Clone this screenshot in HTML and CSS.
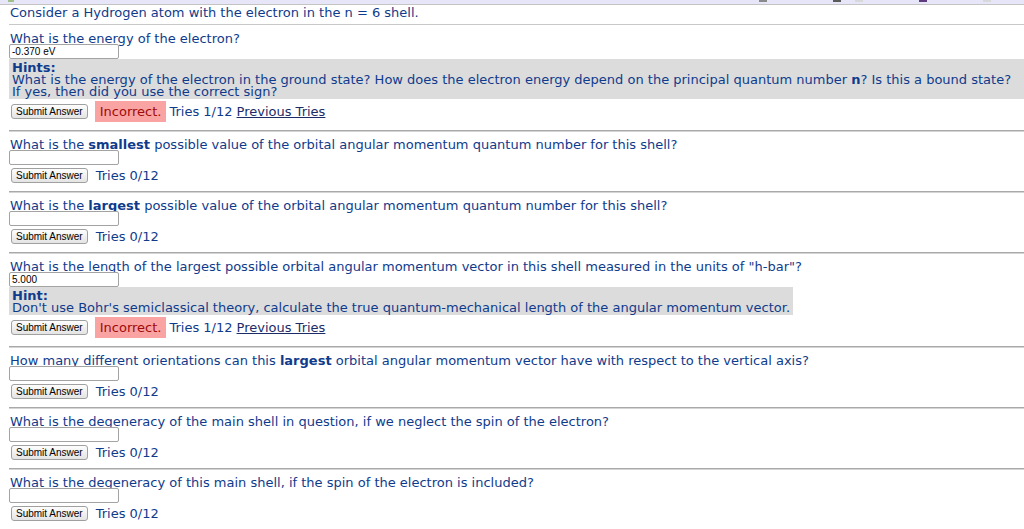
FILE: index.html
```html
<!DOCTYPE html>
<html>
<head>
<meta charset="utf-8">
<link rel="stylesheet" href="styles.css">
</head>
<body>
<div class="topbar">
  <span class="mark mark-green"></span>
  <span class="mark mark-gray" style="margin-left:745px"></span>
  <span class="mark mark-dark" style="margin-left:66px"></span>
  <span class="mark mark-light" style="margin-left:14px"></span>
  <span class="mark mark-purple" style="margin-left:56px"></span>
  <span class="mark mark-light" style="margin-left:56px"></span>
</div>
<div class="page">
  <div class="intro">Consider a Hydrogen atom with the electron in the n = 6 shell.</div>
  <div class="rule-light"></div>

  <div class="question">
    <div class="qtext">What is the energy of the electron?</div>
    <input class="answer" type="text" value="-0.370 eV">
    <div class="hint"><b>Hints:</b><br>What is the energy of the electron in the ground state? How does the electron energy depend on the principal quantum number <b>n</b>? Is this a bound state? If yes, then did you use the correct sign?</div>
    <div class="row">
      <button class="submit">Submit Answer</button>
      <span class="status">Incorrect.</span>
      <span class="tries">Tries 1/12</span>
      <a class="prev" href="#">Previous Tries</a>
    </div>
  </div>
  <div class="rule"></div>

  <div class="question">
    <div class="qtext">What is the <b>smallest</b> possible value of the orbital angular momentum quantum number for this shell?</div>
    <input class="answer" type="text" value="">
    <div class="row">
      <button class="submit">Submit Answer</button>
      <span class="tries">Tries 0/12</span>
    </div>
  </div>
  <div class="rule"></div>

  <div class="question">
    <div class="qtext">What is the <b>largest</b> possible value of the orbital angular momentum quantum number for this shell?</div>
    <input class="answer" type="text" value="">
    <div class="row">
      <button class="submit">Submit Answer</button>
      <span class="tries">Tries 0/12</span>
    </div>
  </div>
  <div class="rule"></div>

  <div class="question">
    <div class="qtext">What is the length of the largest possible orbital angular momentum vector in this shell measured in the units of "h-bar"?</div>
    <input class="answer" type="text" value="5.000">
    <div class="hint"><b>Hint:</b><br>Don't use Bohr's semiclassical theory, calculate the true quantum-mechanical length of the angular momentum vector.</div>
    <div class="row">
      <button class="submit">Submit Answer</button>
      <span class="status">Incorrect.</span>
      <span class="tries">Tries 1/12</span>
      <a class="prev" href="#">Previous Tries</a>
    </div>
  </div>
  <div class="rule"></div>

  <div class="question">
    <div class="qtext">How many different orientations can this <b>largest</b> orbital angular momentum vector have with respect to the vertical axis?</div>
    <input class="answer" type="text" value="">
    <div class="row">
      <button class="submit">Submit Answer</button>
      <span class="tries">Tries 0/12</span>
    </div>
  </div>
  <div class="rule"></div>

  <div class="question">
    <div class="qtext">What is the degeneracy of the main shell in question, if we neglect the spin of the electron?</div>
    <input class="answer" type="text" value="">
    <div class="row">
      <button class="submit">Submit Answer</button>
      <span class="tries">Tries 0/12</span>
    </div>
  </div>
  <div class="rule"></div>

  <div class="question">
    <div class="qtext">What is the degeneracy of this main shell, if the spin of the electron is included?</div>
    <input class="answer" type="text" value="">
    <div class="row">
      <button class="submit">Submit Answer</button>
      <span class="tries">Tries 0/12</span>
    </div>
  </div>
</div>
</body>
</html>
```
FILE: styles.css
```css
html, body {
  margin: 0;
  padding: 0;
  background: #ffffff;
}
body {
  font-family: "DejaVu Sans", Verdana, sans-serif;
  font-size: 13px;
  color: #0f3b8c;
  overflow: hidden;
}
.topbar {
  height: 4px;
  background: #e6e6f8;
  border-bottom: 1px solid #c4c4c4;
  display: flex;
  align-items: flex-start;
  overflow: hidden;
}
.mark {
  display: block;
  height: 2px;
  width: 8px;
  flex: none;
}
.mark-green { background: #9fbf8a; margin-left: 8px; width: 6px; }
.mark-gray { background: #8a8a8a; }
.mark-dark { background: #5a5a5a; }
.mark-light { background: #d8d8d8; }
.mark-purple { background: #5d3b7d; }
.page {
  padding-left: 9px;
}
.intro {
  line-height: 14px;
  padding-top: 1px;
  padding-left: 1px;
}
.rule-light {
  height: 1px;
  background: #c8c8c8;
  margin-top: 4px;
}
.question {
  padding-top: 7px;
}
.rule-light + .question {
  padding-top: 8px;
}
.qtext {
  line-height: 11px;
  padding-left: 1px;
  white-space: nowrap;
}
.answer {
  display: block;
  box-sizing: border-box;
  width: 110px;
  height: 15px;
  margin: 0;
  padding: 0 2px;
  border: 1px solid #a3a3a3;
  border-radius: 2px;
  font-family: "Liberation Sans", Arial, sans-serif;
  font-size: 10px;
  color: #000;
  background: #fff;
  outline: none;
  position: relative;
}
.hint {
  width: fit-content;
  box-sizing: border-box;
  background: #dcdcdc;
  padding: 3px 3px 1px 3px;
  line-height: 12px;
}
.row {
  display: flex;
  align-items: center;
  min-height: 15px;
  margin-top: 3px;
  white-space: nowrap;
}
.hint + .row {
  margin-top: 2px;
}
.submit {
  box-sizing: border-box;
  height: 15px;
  margin: 0 7px 0 2px;
  padding: 0 4px;
  border: 1px solid #a0a0a0;
  border-radius: 3px;
  background: linear-gradient(#fdfdfd, #e4e4e4);
  font-family: "Liberation Sans", Arial, sans-serif;
  font-size: 10px;
  line-height: 13px;
  color: #000;
}
.status {
  display: block;
  height: 21px;
  line-height: 21px;
  padding: 0 5px;
  background: #f9a3a3;
  color: #a00a0a;
}
.tries {
  margin-left: 1px;
  line-height: 15px;
}
.status + .tries {
  margin-left: 3px;
}
.prev {
  margin-left: 4px;
  color: #1b2c68;
  text-decoration: underline;
  line-height: 15px;
}
.rule {
  height: 2px;
  margin-top: 8px;
  background: linear-gradient(#a9a9a9 50%, #d4d4d4 50%);
}
```
